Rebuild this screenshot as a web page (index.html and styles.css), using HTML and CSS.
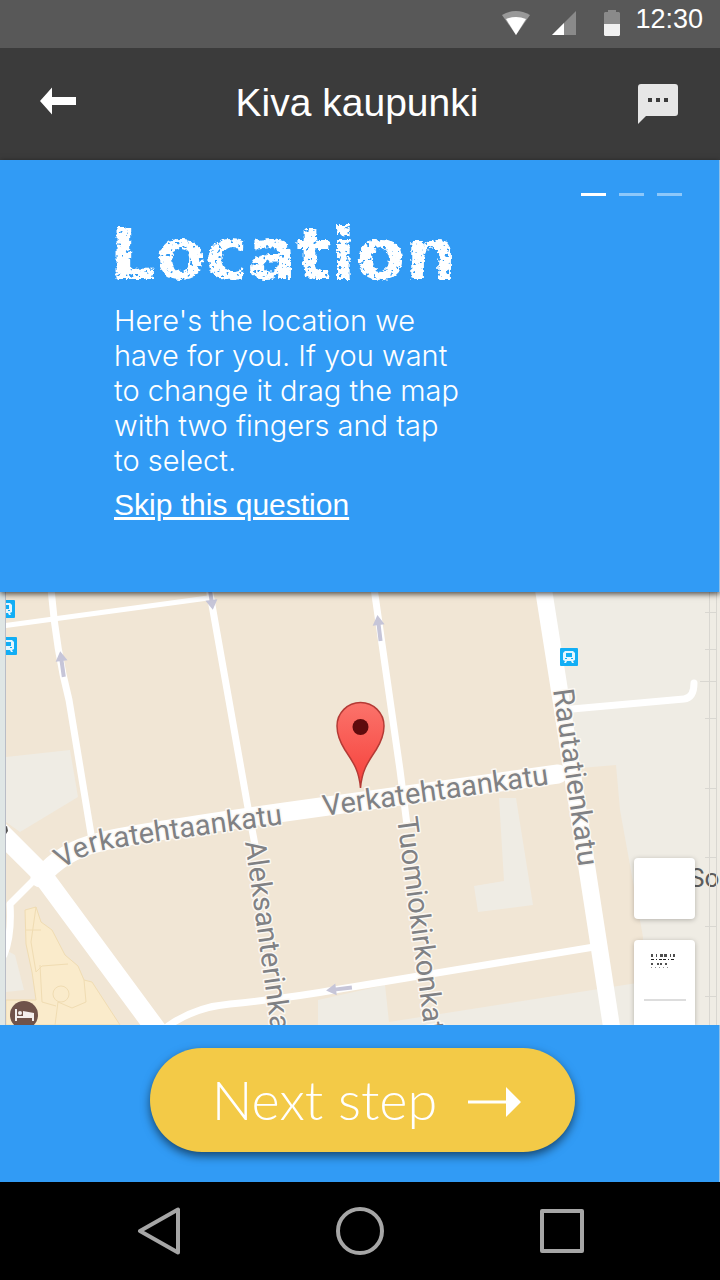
FILE: index.html
```html
<!DOCTYPE html>
<html lang="en">
<head>
<meta charset="utf-8">
<meta name="viewport" content="width=device-width, initial-scale=1">
<title>Kiva kaupunki</title>
<link rel="stylesheet" href="styles.css">
</head>
<body>
<svg class="defs" width="0" height="0" aria-hidden="true">
  <filter id="chalk" x="-5%" y="-5%" width="110%" height="110%">
    <feTurbulence type="fractalNoise" baseFrequency="0.25" numOctaves="2" seed="4" result="noise"/>
    <feDisplacementMap in="SourceGraphic" in2="noise" scale="6" xChannelSelector="R" yChannelSelector="G" result="rough"/>
    <feColorMatrix in="noise" type="matrix" values="0 0 0 0 0  0 0 0 0 0  0 0 0 0 0  0 0 -14 0 10.2" result="grain"/>
    <feComposite in="rough" in2="grain" operator="in"/>
  </filter>
</svg>
<div class="screen">
  <div class="status-bar">
    <svg class="status-wifi" width="28" height="24" viewBox="0 0 28 24"><path fill="#999" d="M0 4Q14-4 28 4L14 24Z"/><path fill="#fff" d="M4 8Q14 4 24 8L14 24Z"/></svg>
    <svg class="status-signal" width="24" height="24" viewBox="0 0 24 24"><path fill="#8a8a8a" d="M24 0V24H0Z"/><path fill="#fff" d="M12 12V24H0Z"/></svg>
    <svg class="status-battery" width="16" height="26" viewBox="0 0 16 26"><path fill="#8a8a8a" d="M4 0h8v2h3l1 1v11H0V3l1-1h3Z"/><path fill="#f1f1f1" d="M0 14h16v11l-1 1H1l-1-1Z"/></svg>
    <time class="clock">12:30</time>
  </div>
  <header class="app-bar">
    <button class="icon-button" type="button" aria-label="Back">
      <svg width="36" height="34" viewBox="0 0 36 34"><path fill="#fff" d="M0 14 12 0.500V10H36V18H12V27.500Z"/></svg>
    </button>
    <div class="app-title">Kiva kaupunki</div>
    <button class="icon-button" type="button" aria-label="Messages">
      <svg width="40" height="40" viewBox="0 0 40 40"><path fill="#e6e6e6" d="M3 0H37Q40 0 40 3V29Q40 32 37 32H8L0 40V3Q0 0 3 0Z"/><path fill="#3b3b3b" d="M10 14h4v4h-4zM18 14h4v4h-4zM26 14h4v4h-4z"/></svg>
    </button>
  </header>
  <main class="content">
    <section class="question">
      <div class="steps" aria-label="Step 1 of 3"><span class="step step-current"></span><span class="step"></span><span class="step"></span></div>
      <h1 class="heading">Location</h1>
      <p class="lead">Here's the location we have for you. If you want to change it drag the map with two fingers and tap to&nbsp;select.</p>
      <a class="skip" href="#next">Skip this question</a>
    </section>
    <section class="map" aria-label="Map">
      <svg class="map-canvas" viewBox="0 592 720 433" preserveAspectRatio="xMidYMid slice">
        <defs>
          <linearGradient id="pin" x1="0" y1="0" x2="0" y2="1"><stop offset="0" stop-color="#fb736b"/><stop offset="1" stop-color="#f6403a"/></linearGradient>
          <path id="verk1" d="M62 869Q75 860 95 852Q115 846 330 818"/>
          <path id="verk2" d="M324 816 580 780"/>
          <path id="raut" d="M553 690 583 895"/>
          <path id="alek" d="M245 842 278 1080"/>
          <path id="tuom" d="M397 818 431 1080"/>
          <g id="stop"><rect width="18" height="18" rx="1" fill="#12aef5"/><path fill="#e4f6ff" d="M5 3h8l2 2v7l-2 1 1 2h-2l-1-2H7l-1 2H4l1-2-2-1V5Z"/><path fill="#12aef5" d="M6 5h6v4H6zM5 10h2v1H5zM11 10h2v1h-2z"/></g>
          <path id="oneway" d="M0-13 6-3H2V13H-2V-3H-6Z" fill="#c6c5d8"/>
        </defs>
        <rect y="592" width="720" height="433" fill="#f1e6d5"/>
        <g fill="#efece4">
          <path d="M545 592H720V1025H650L637 983 642 980 643 937 620 810 616 765 580 768Z"/>
          <path d="M318 1000 385 985 389 1022 637 983 655 1025H318Z"/>
          <path d="M499 798H516L533 905 478 912 474 886 504 881Z"/>
          <path d="M6 757 70 750 78 797 20 832 6 822ZM6 950 15 955 24 990 6 992Z"/>
        </g>
        <path fill="#faebcb" stroke="#f0dcb2" d="M25 910 36 907 41 922 52 930 65 955 78 966 84 980 92 982 120 1025H6V1000H36L32 972 26 944Z"/>
        <g fill="none" stroke="#f0dcb2"><path d="M36 907 31 942 36 972M26 930H41M36 972 42 966 68 964M84 980 86 1002 72 1008 58 1002 55 1025M40 965 42 1002 56 1006"/><circle cx="61" cy="994" r="8"/></g>
        <g fill="none" stroke="#fff" stroke-linecap="round" stroke-linejoin="round">
          <path stroke-width="7" d="M51 588Q56 650 69 700L92 840"/>
          <path stroke-width="7" d="M209 588 248 808 255 845"/>
          <path stroke-width="5" d="M2 626 208 598"/>
          <path stroke-width="7" d="M374 588 400 770 407 825"/>
          <path stroke-width="17" d="M542 580 561 700 612 1030"/>
          <path stroke-width="7" d="M572 709 684 699Q694 698 694 683"/>
          <path stroke-width="19" d="M40 878Q62 851 100 842Q130 834 285 812L558 774"/>
          <path stroke-width="20" d="M0 832 40 872 158 1032"/>
          <path stroke-width="7" d="M38 876 10 904Q12 935 4 955"/>
          <path stroke-width="7" d="M168 1026Q195 1007 230 1004 290 998 340 989L594 947"/>
        </g>
        <use href="#oneway" transform="translate(62 664) rotate(-8)"/>
        <use href="#oneway" transform="translate(379 628) rotate(-7)"/>
        <use href="#oneway" transform="translate(211 597) rotate(172)"/>
        <use href="#oneway" transform="translate(339 989) rotate(-97)"/>
        <g class="map-label">
          <text><textPath href="#verk1">Verkatehtaankatu</textPath></text>
          <text><textPath href="#verk2">Verkatehtaankatu</textPath></text>
          <text><textPath href="#raut">Rautatienkatu</textPath></text>
          <text><textPath href="#alek">Aleksanterinkatu</textPath></text>
          <text><textPath href="#tuom">Tuomiokirkonkatu</textPath></text>
          <text class="map-place" x="689" y="887">So</text>
        </g>
        <use href="#stop" x="-3" y="600"/><use href="#stop" x="-1" y="637"/><use href="#stop" x="560" y="648"/>
        <circle cx="24" cy="1015" r="14" fill="#70534a"/><path fill="#f4efed" d="M15 1009H17V1016H23V1011L34 1013V1021H32V1018H17V1021H15Z"/><circle cx="20" cy="1013" r="2" fill="#f4efed"/>
        <path d="M5 827 7 826 8 831 6 834Z" fill="#555"/>
        <path stroke="#d9d7d1" fill="none" d="M709.500 592V1025M716.500 592V1025M705 612.500h12M705 649.500h12M700 681.500h17M705 718.500h12M705 788.500h12M705 857.500h12M705 926.500h12M705 996.500h12"/>
        <path fill="#dfe6e5" d="M0 592H5V1025H0Z"/><path stroke="#b9bdc6" d="M5.500 592V1025"/>
        <path fill="url(#pin)" stroke="#b43a35" stroke-width="1.500" d="M360.500 788C359 770 353 762 345 750 340 742 337 735 337 726A23.500 23.500 0 0 1 384 726C384 735 381 742 376 750 368 762 362 770 360.500 788Z"/>
        <circle cx="360.500" cy="727" r="8" fill="#5f0b0d"/>
      </svg>
      <div class="map-controls">
        <button class="map-button" type="button" aria-label="My location"></button>
        <button class="map-button map-zoom" type="button" aria-label="Zoom">
          <svg width="42" height="48" viewBox="0 0 42 48"><g stroke="#222" fill="none"><path stroke-width="3" stroke-dasharray="2 3 1 3 3 1 3 3 1 2 2 3" opacity=".8" d="M7 2.500H33"/><path stroke-width="1" stroke-dasharray="3 2 1 2 3 1" d="M7 6.500H31"/><path stroke-width="2" stroke-dasharray="2 4 2 1 2 3" opacity=".8" d="M7 11H27"/><path stroke-width="1" stroke-dasharray="1 3" opacity=".5" d="M7 14.500H27"/></g><path stroke="#ddd" stroke-width="2" d="M0 47H42"/></svg>
        </button>
      </div>
    </section>
    <div class="actions" id="next">
      <button class="next" type="button">Next step
        <svg width="53" height="34" viewBox="0 0 53 34"><path fill="#fff" d="M0 17.500H38V4L53 19 38 34V20.500H0Z"/></svg>
      </button>
    </div>
  </main>
  <nav class="nav-bar" aria-label="System">
    <button class="icon-button" type="button" aria-label="Back"><svg width="48" height="48" viewBox="0 0 48 48"><path class="nav-line" d="M44 2.500V45.500L6 24Z"/></svg></button>
    <button class="icon-button" type="button" aria-label="Home"><svg width="48" height="48" viewBox="0 0 48 48"><circle class="nav-line" cx="24" cy="24" r="22"/></svg></button>
    <button class="icon-button" type="button" aria-label="Recent apps"><svg width="48" height="48" viewBox="0 0 48 48"><rect class="nav-line" x="4" y="4" width="40" height="40"/></svg></button>
  </nav>
</div>
</body>
</html>
```

FILE: styles.css
```css
* { box-sizing: border-box; }
body {
  margin: 0;
  background: #000;
  font-family: "Liberation Sans", Arial, sans-serif;
  color: #fff;
}
button {
  border: 0;
  margin: 0;
  padding: 0;
  background: none;
  color: inherit;
  font: inherit;
  cursor: pointer;
}
svg { display: block; flex: none; }
.defs { position: absolute; }
.screen {
  min-height: 100vh;
  display: flex;
  flex-direction: column;
}
.status-bar {
  height: 48px;
  padding: 0 17px 2px 0;
  display: flex;
  justify-content: flex-end;
  align-items: center;
  background: #585858;
}
.status-signal { margin-left: 22px; }
.status-battery { margin: 0 15px 0 28px; }
.clock {
  font-size: 27px;
  line-height: 28px;
  padding-bottom: 8px;
}
.app-bar {
  height: 112px;
  padding: 0 42px 0 40px;
  display: flex;
  justify-content: space-between;
  align-items: center;
  background: #3b3b3b;
}
.app-title { font-size: 39px; line-height: 48px; padding-bottom: 2px; }
.content {
  flex: 1;
  display: flex;
  flex-direction: column;
}
.question {
  position: relative;
  z-index: 1;
  padding: 33px 37px 70px 114px;
  background: #319bf5;
  border-right: 1px solid #8fbfe8;
  box-shadow: 0 2px 6px rgba(0, 0, 0, 0.7);
}
.steps {
  display: flex;
  justify-content: flex-end;
  gap: 13px;
}
.step { width: 25px; height: 3px; background: #8dc8fa; }
.step-current { background: #fff; }
.heading {
  margin: 18px 0 9px -4px;
  font: bold 72px/80px Chalkduster, "DejaVu Sans", sans-serif;
  filter: url(#chalk);
}
.lead {
  margin: 0 0 9px;
  max-width: 350px;
  font: 300 29px/35px "Helvetica Neue", Inter, sans-serif;
}
.skip {
  display: inline-block;
  color: inherit;
  font-size: 30px;
  line-height: 35px;
}
.map {
  position: relative;
  flex: 1;
  min-height: 433px;
  overflow: hidden;
  background: #f1e6d5;
}
.map-canvas {
  position: absolute;
  inset: 0;
  width: 100%;
  height: 100%;
}
.map-label {
  font: 29px Roboto, sans-serif;
  fill: #808184;
  stroke: #fbf8f3;
  stroke-width: 3px;
  stroke-linejoin: round;
  paint-order: stroke;
}
.map-place { font-size: 26px; fill: #5c5c5c; stroke: #efece4; }
.map-controls {
  position: absolute;
  right: 25px;
  top: 266px;
  bottom: 0;
  width: 61px;
  display: flex;
  flex-direction: column;
  gap: 21px;
}
.map-button {
  height: 61px;
  border-radius: 4px;
  background: #fff;
  box-shadow: 0 1px 5px rgba(0, 0, 0, 0.25);
}
.map-zoom {
  flex: 1;
  padding-top: 13px;
  border-radius: 4px 4px 0 0;
  display: flex;
  justify-content: center;
  align-items: flex-start;
}
.actions {
  padding: 23px 0 30px 6px;
  display: flex;
  justify-content: center;
  background: #319bf5;
  border-right: 1px solid #8fbfe8;
}
.next {
  height: 104px;
  padding: 0 54px 0 62px;
  display: flex;
  align-items: center;
  gap: 31px;
  border-radius: 52px;
  background: #f3ca47;
  box-shadow: 0 4px 10px rgba(0, 0, 0, 0.55);
  font: 300 54px/64px "Gill Sans", Lato, sans-serif;
}
.nav-bar {
  height: 98px;
  padding: 0 134px;
  display: flex;
  justify-content: space-between;
  align-items: center;
  background: #000;
}
.nav-line {
  fill: none;
  stroke: #a6a6a6;
  stroke-width: 4px;
  stroke-linejoin: round;
}
```
